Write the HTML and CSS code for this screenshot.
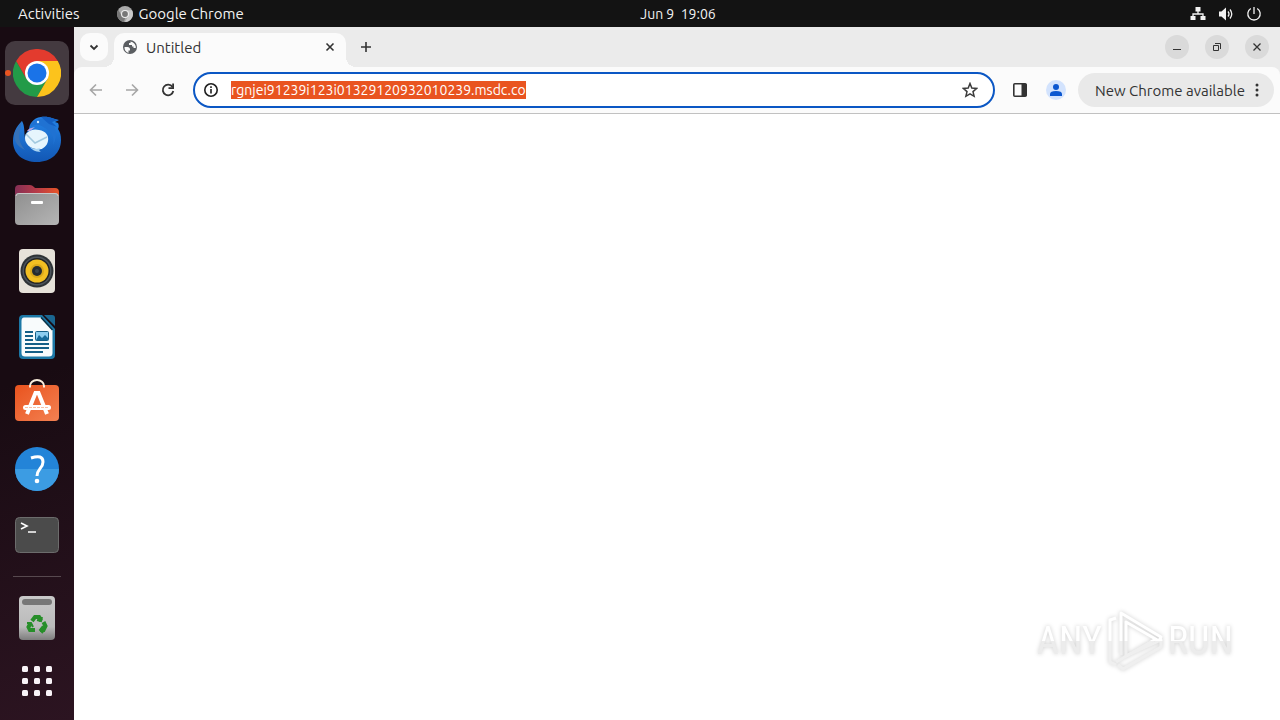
FILE: index.html
```html
<!DOCTYPE html>
<html lang="en">
  <head>
    <meta charset="UTF-8" />
    <meta name="viewport" content="width=device-width, initial-scale=1.0" />
    <title>Untitled</title>
    <link rel="stylesheet" href="styles.css">
  </head>
  <body>
    <header class="topbar">
      <div class="topbar-left">
        <button class="topbar-button">Activities</button>
        <button class="topbar-button app-menu">
          <svg width="16" height="16" viewBox="0 0 16 16" aria-hidden="true">
            <circle cx="8" cy="8" r="8" fill="#a9a9a9" />
            <path d="M8 4.2H15A8 8 0 0 1 8 16l3.3-6.1z" fill="#c9c9c9" />
            <path d="M1.3 3.8 4.7 9.9 8 12 7 16A8 8 0 0 1 1.3 3.8z" fill="#777" />
            <circle cx="8" cy="8" r="4" fill="#eee" />
            <circle cx="8" cy="8" r="2.9" fill="#777" />
          </svg>
          Google Chrome
        </button>
      </div>
      <button class="topbar-button clock">Jun 9&nbsp; 19:06</button>
      <button class="topbar-button status" aria-label="System menu">
        <svg width="16" height="16" viewBox="0 0 16 16" fill="#f2f2f2">
          <path d="M5.5 1h5v4.500h-5zM.5 10h5v4h-5zM10.500 10h5v4h-5z" />
          <path d="M8 5v3M3 11V8h10v3" fill="none" stroke="#f2f2f2" stroke-width="1.300" />
        </svg>
        <svg width="16" height="16" viewBox="0 0 16 16" fill="#f2f2f2">
          <path d="M1 5.500h2.500L8 1.500v13l-4.500-4H1z" />
          <path d="M10 5.500q2 2.500 0 5M12 3.500q3.500 4.500 0 9" fill="none" stroke="#f2f2f2" stroke-width="1.300" />
        </svg>
        <svg width="16" height="16" viewBox="0 0 16 16" fill="none" stroke="#f2f2f2" stroke-width="1.300">
          <path d="M8 1v7M4.800 2.500a6.200 6.200 0 1 0 6.400 0" />
        </svg>
      </button>
    </header>

    <div class="desktop">
      <nav class="dock" aria-label="Dock">
        <button class="dock-item active" aria-label="Google Chrome">
          <svg width="48" height="48" viewBox="0 0 48 48">
            <path d="M24 24 3.200 12A24 24 0 0 1 44.800 12z" fill="#e33b2e" />
            <path d="M3.200 12A24 24 0 0 0 24 48L34.400 30 24 24 13.600 30z" fill="#229b48" />
            <path d="M24 12H44.800A24 24 0 0 1 24 48L34.400 30z" fill="#fcc31c" />
            <path d="M3.200 12 13.600 30 24 12z" fill="#e33b2e" />
            <circle cx="24" cy="24" r="12" fill="#fff" />
            <circle cx="24" cy="24" r="9.500" fill="#1a73e8" />
          </svg>
        </button>
        <button class="dock-item" aria-label="Thunderbird">
          <svg width="48" height="48" viewBox="0 0 48 48">
            <defs>
              <linearGradient id="bird" x2="0" y2="1">
                <stop stop-color="#2584e6" />
                <stop offset="1" stop-color="#1257b4" />
              </linearGradient>
            </defs>
            <path d="M9 6C3 12 0 18 0 26c0 13 10 21 24 21s24-9 24-22c0-5-1-8-3-11 1-2 1-4 0-6l-3-1 4-2c-7-1-9-4-18-3-8 1-12 7-12 13-3 2-4 5-4 8-1-5 0-12-3-17z" fill="url(#bird)" />
            <path d="M9 6c-2 11-6 18 3 29C3 31 0 24 2 17z" fill="#3672b9" />
            <path d="M17 12c5-4 11-2 15 1 6 4 10 9 8 17 6-10 3-22-8-26-7-2-13 2-15 8z" fill="#2072d2" />
            <path d="M28 2c9-1 11 2 17 3l-6 2 5 5-8-3z" fill="#1460c3" />
            <path d="M12 23c0-6 7-10 14-8 7 1 10 6 9 11-1 6-7 10-12 8-6-1-11-5-11-11z" fill="#e6f5fd" />
            <path d="m13 19 9 9 12-6" fill="none" stroke="#a2c9df" stroke-width="1.500" />
            <path d="M16 31c4 4 9 3 11 2-1 2-1 3 1 4-6 0-10-3-12-6z" fill="#a9d4f2" />
            <path d="M14 16c3-4 6-3 8-4l-5 4z" fill="#b9a9e4" />
            <circle cx="25" cy="7" r="1.200" fill="#cfeaff" />
          </svg>
        </button>
        <button class="dock-item" aria-label="Files">
          <svg width="48" height="48" viewBox="0 0 48 48">
            <defs>
              <linearGradient id="folderback"><stop stop-color="#842f55" /><stop offset=".5" stop-color="#b83b48" /><stop offset="1" stop-color="#e85527" /></linearGradient>
              <linearGradient id="folder" x2="1" y2="1"><stop stop-color="#8f8f8f" /><stop offset="1" stop-color="#b5b5b5" /></linearGradient>
            </defs>
            <path d="M2 20V8q0-4 4-4h11q2 0 4 2l1 1h20q4 0 4 4v12z" fill="url(#folderback)" />
            <rect x="2" y="12" width="44" height="32" rx="4" fill="url(#folder)" />
            <path d="M3 15q0-2.500 3-2.500h36q3 0 3 2.500" fill="none" stroke="#c9c9c9" />
            <rect x="18" y="20" width="12" height="3" rx="1" fill="#fff" />
          </svg>
        </button>
        <button class="dock-item" aria-label="Rhythmbox">
          <svg width="48" height="48" viewBox="0 0 48 48">
            <rect x="6" y="2" width="36" height="44" rx="4" fill="#e6e2d9" />
            <circle cx="24" cy="24" r="16.500" fill="#2e3336" />
            <circle cx="24" cy="24" r="14.500" fill="#4d555c" />
            <circle cx="24" cy="24" r="13" fill="#232424" />
            <circle cx="24" cy="24" r="11.500" fill="#f2bf22" />
            <circle cx="24" cy="24" r="7" fill="#d9a81b" />
            <circle cx="24" cy="24" r="5" fill="#252b30" />
            <circle cx="24" cy="24" r="2" fill="#3a444c" />
          </svg>
        </button>
        <button class="dock-item" aria-label="LibreOffice Writer">
          <svg width="48" height="48" viewBox="0 0 48 48">
            <path d="M10 2h19l13 14v26q0 4-4 4H10q-4 0-4-4V6q0-4 4-4z" fill="#1c78a6" />
            <path d="M11 4.500h17L39.500 17v23q0 3.500-3.500 3.500H12q-3.500 0-3.500-3.500V8q0-3.500 2.500-3.500z" fill="#f8fbfc" />
            <path d="M31 2h8q3 0 3 3v8z" fill="#1a6791" />
            <path d="M28 4.500 39.500 17" stroke="#093247" stroke-width="1.500" />
            <path d="M12 19h8M12 23h8M12 27h8M12 31h24M12 35h24M12 39h18" stroke="#145f87" stroke-width="2" />
            <rect x="22.500" y="18.500" width="13" height="9" rx="1" fill="#8ccdf0" stroke="#145f87" />
            <path d="m23 27 3-5 3 3 3-3 3 3v2z" fill="#176b9b" />
          </svg>
        </button>
        <button class="dock-item" aria-label="Ubuntu Software">
          <svg width="48" height="48" viewBox="0 0 48 48">
            <defs><linearGradient id="bag" x2="1" y2="1"><stop stop-color="#e9531e" /><stop offset="1" stop-color="#f38152" /></linearGradient></defs>
            <rect x="2" y="6" width="44" height="36" rx="4" fill="url(#bag)" />
            <path d="M17 8.500V7a7 6 0 0 1 14 0v1.500" fill="none" stroke="#faeedc" stroke-width="2" />
            <path d="M14 35 22.500 14h3L34 35" fill="none" stroke="#fff" stroke-width="4" />
            <rect x="10" y="26" width="28" height="5" rx="2.500" fill="#fff" />
            <path d="M12 28.500h24" stroke="#f6a47e" stroke-dasharray="3 1" stroke-width=".7" />
          </svg>
        </button>
        <button class="dock-item" aria-label="Help">
          <svg width="48" height="48" viewBox="0 0 48 48">
            <circle cx="24" cy="24" r="22" fill="#2384d8" />
            <path d="M2 24a22 22 0 0 0 44 0z" fill="#3c9ce3" />
            <path d="M18 13q12-4 12 4c0 6-6 7-6 14" fill="none" stroke="#fff" stroke-width="3" />
            <circle cx="24" cy="36" r="2.300" fill="#fff" />
          </svg>
        </button>
        <button class="dock-item" aria-label="Terminal">
          <svg width="48" height="48" viewBox="0 0 48 48">
            <rect x="2.500" y="6.500" width="43" height="35" rx="4" fill="#4b4b4b" stroke="#6c6c6c" />
            <path d="m8 12 6 3-6 3M15 21h8" fill="none" stroke="#fff" stroke-width="1.600" />
          </svg>
        </button>
        <hr class="dock-separator" />
        <button class="dock-item" aria-label="Trash">
          <svg width="48" height="48" viewBox="0 0 48 48">
            <defs><linearGradient id="trash" x2="0" y2="1"><stop stop-color="#c9c9c9" /><stop offset=".7" stop-color="#bbb" /><stop offset="1" stop-color="#7d7d7d" /></linearGradient></defs>
            <rect x="6" y="2" width="36" height="44" rx="4" fill="url(#trash)" />
            <rect x="9" y="5" width="30" height="6" rx="3" fill="#777" />
            <g fill="none" stroke="#278e29" stroke-width="4">
              <path d="m19 27 3-4h4l2 4M30.500 28l2 4-2 4H27M22 36h-5l-1.500-3 2-4" />
              <path d="m29 23-1 4-4-1M30 32l-3 4 3 3M14 29h4l2 4" stroke-width="2" />
            </g>
          </svg>
        </button>
        <button class="dock-item apps" aria-label="Show Applications">
          <svg width="32" height="32" viewBox="0 0 32 32" fill="#f8f3f7">
            <rect x="1" y="1" width="6" height="6" rx="1.500" /><rect x="13" y="1" width="6" height="6" rx="1.500" /><rect x="25" y="1" width="6" height="6" rx="1.500" />
            <rect x="1" y="13" width="6" height="6" rx="1.500" /><rect x="13" y="13" width="6" height="6" rx="1.500" /><rect x="25" y="13" width="6" height="6" rx="1.500" />
            <rect x="1" y="25" width="6" height="6" rx="1.500" /><rect x="13" y="25" width="6" height="6" rx="1.500" /><rect x="25" y="25" width="6" height="6" rx="1.500" />
          </svg>
        </button>
      </nav>

      <div class="browser">
        <div class="tabstrip">
          <button class="tab-search" aria-label="Search tabs">
            <svg width="16" height="16" viewBox="0 0 16 16"><path d="m4.500 6.500 3.500 3.500 3.500-3.500" fill="none" stroke="#333" stroke-width="1.800" /></svg>
          </button>
          <div class="tab">
            <svg width="16" height="16" viewBox="0 0 16 16" aria-hidden="true">
              <circle cx="8" cy="8" r="7" fill="#5b5e62" />
              <path d="M2.500 8h3q2.500 0 2.500 2.500v1H6.500V14A6 6 0 0 1 2.500 8zM8.500 2.500V4H7v2h3v1.500h1.500V9h2.300A6 6 0 0 0 8.500 2.500z" fill="#fbfbfb" />
            </svg>
            <span class="tab-title">Untitled</span>
            <button class="icon-button tab-close" aria-label="Close tab">
              <svg width="16" height="16" viewBox="0 0 16 16"><path d="m4.500 4.500 7 7m0-7-7 7" stroke="#333" stroke-width="1.600" /></svg>
            </button>
          </div>
          <button class="icon-button new-tab" aria-label="New tab">
            <svg width="16" height="16" viewBox="0 0 16 16"><path d="M8 3v10M3 8h10" stroke="#333" stroke-width="1.600" /></svg>
          </button>
          <div class="window-controls">
            <button class="window-button" aria-label="Minimize">
              <svg width="16" height="16" viewBox="0 0 16 16"><path d="M4 10.500h8" stroke="#333" /></svg>
            </button>
            <button class="window-button" aria-label="Restore">
              <svg width="16" height="16" viewBox="0 0 16 16" fill="none" stroke="#333"><path d="M4.500 6.500h5v5h-5zM6 4.500h5.500V10" /></svg>
            </button>
            <button class="window-button" aria-label="Close">
              <svg width="16" height="16" viewBox="0 0 16 16"><path d="m4.500 4.500 7 7m0-7-7 7" stroke="#333" stroke-width="1.300" /></svg>
            </button>
          </div>
        </div>

        <div class="toolbar">
          <div class="nav-buttons">
            <button class="icon-button" aria-label="Back" disabled>
              <svg width="16" height="16" viewBox="0 0 16 16" fill="none" stroke="#a6a6a6" stroke-width="1.600"><path d="M14 8H3M8 2.500 2.500 8 8 13.500" /></svg>
            </button>
            <button class="icon-button" aria-label="Forward" disabled>
              <svg width="16" height="16" viewBox="0 0 16 16" fill="none" stroke="#a6a6a6" stroke-width="1.600"><path d="M2 8h11M8 2.500 13.500 8 8 13.500" /></svg>
            </button>
            <button class="icon-button" aria-label="Reload">
              <svg width="16" height="16" viewBox="0 0 16 16"><path d="M12.500 5A5.300 5.300 0 1 0 13.300 9" fill="none" stroke="#333" stroke-width="1.800" /><path d="M14 1.500V7H8.500V5.300h3.700V1.500z" fill="#333" /></svg>
            </button>
          </div>
          <form class="omnibox">
            <button type="button" class="icon-button" aria-label="View site information">
              <svg width="16" height="16" viewBox="0 0 16 16"><circle cx="8" cy="8" r="6.200" fill="none" stroke="#1f1f1f" stroke-width="1.600" /><path d="M8 7v4.500M8 4.300v1.700" stroke="#1f1f1f" stroke-width="1.600" /></svg>
            </button>
            <input class="url" id="url" type="text" aria-label="Address and search bar" value="rgnjei91239i123i01329120932010239.msdc.co" spellcheck="false" autocomplete="off" />
            <button type="button" class="icon-button" aria-label="Bookmark this tab">
              <svg width="16" height="16" viewBox="0 0 16 16"><path d="m8 1.500 1.800 4.500 4.900.4L11 9.600l1.100 4.700L8 11.800l-4.100 2.500L5 9.600 1.300 6.400 6.200 6z" fill="none" stroke="#3c3c3c" stroke-width="1.500" /></svg>
            </button>
          </form>
          <div class="toolbar-actions">
            <button class="icon-button" aria-label="Side panel">
              <svg width="16" height="16" viewBox="0 0 16 16"><rect x="1.800" y="1.800" width="12.400" height="12.400" rx="1" fill="none" stroke="#333" stroke-width="1.600" /><path d="M9.500 2h5v12h-5z" fill="#333" /></svg>
            </button>
            <button class="icon-button" aria-label="Profile">
              <svg width="20" height="20" viewBox="0 0 20 20"><circle cx="10" cy="10" r="10" fill="#d3e3fd" /><circle cx="10" cy="7" r="3" fill="#0b57d0" /><path d="M4 16v-2q0-3 6-3t6 3v2z" fill="#0b57d0" /></svg>
            </button>
          </div>
          <button class="update-button">
            New Chrome available
            <svg width="4" height="16" viewBox="0 0 4 16" fill="#333"><circle cx="2" cy="3" r="1.500" /><circle cx="2" cy="8" r="1.500" /><circle cx="2" cy="13" r="1.500" /></svg>
          </button>
        </div>

        <main class="page">
          <div class="watermark">
            <span class="watermark-text">ANY</span>
            <svg width="58" height="62" viewBox="0 0 58 62" fill="none" stroke-linejoin="round">
              <defs>
                <linearGradient id="mark" gradientUnits="userSpaceOnUse" x1="0" y1="0" x2="0" y2="62">
                  <stop offset=".5" stop-color="#fff" />
                  <stop offset=".5" stop-color="#efefef" />
                </linearGradient>
              </defs>
              <g stroke="url(#mark)" stroke-width="3">
                <path d="M10 8 4 10v42l6 3" />
                <path d="M15 45V3l40 24-2 4-33-19v34l35-16v7L17 59l-5-4" />
                <path d="m10 52 40-23" />
              </g>
            </svg>
            <span class="watermark-text">RUN</span>
          </div>
        </main>
      </div>
    </div>

    <script>
      const url = document.getElementById("url");
      url.focus();
      url.select();
    </script>
  </body>
</html>
```
FILE: styles.css
```css
* {
  box-sizing: border-box;
}

body {
  margin: 0;
  min-height: 100vh;
  display: flex;
  flex-direction: column;
  background: #fff;
  font-family: Ubuntu, "Noto Sans", sans-serif;
  font-size: 15px;
  color: #333;
}

button {
  border: 0;
  padding: 0;
  background: none;
  font: inherit;
  color: inherit;
}

svg {
  display: block;
  flex-shrink: 0;
}

.topbar {
  display: grid;
  grid-template-columns: 1fr auto 1fr;
  align-items: center;
  height: 27px;
  padding: 0 18px;
  background: #131313;
  color: #f2f2f2;
}

.topbar-left {
  display: flex;
  gap: 37px;
}

.topbar-button {
  display: flex;
  align-items: center;
  gap: 6px;
  white-space: nowrap;
}

.clock {
  padding-left: 76px;
  font-size: 14px;
}

.status {
  justify-self: end;
  gap: 12px;
}

.desktop {
  flex: 1;
  display: flex;
}

.dock {
  width: 74px;
  padding: 14px 5px 0;
  display: flex;
  flex-direction: column;
  gap: 2px;
  background: linear-gradient(160deg, #180b12 50%, #2c1421);
}

.dock-item {
  position: relative;
  display: flex;
  align-items: center;
  justify-content: center;
  height: 64px;
  border-radius: 10px;
}

.dock-item.active {
  background: #443a40;
}

.dock-item.active::before {
  content: "";
  position: absolute;
  left: 0;
  top: 29px;
  width: 6px;
  height: 6px;
  border-radius: 50%;
  background: #e95420;
}

.dock-item.apps {
  height: 58px;
}

.dock-separator {
  width: 48px;
  height: 1px;
  margin: 7px auto;
  border: 0;
  background: #57494f;
}

.browser {
  flex: 1;
  min-width: 0;
  display: flex;
  flex-direction: column;
  background: #ebebeb;
}

.tabstrip {
  display: flex;
  align-items: center;
  height: 40px;
  padding: 0 11px 0 6px;
}

.tab-search {
  display: grid;
  place-items: center;
  width: 28px;
  height: 28px;
  border-radius: 10px;
  background: #fbfbfb;
}

.tab {
  position: relative;
  align-self: flex-end;
  display: flex;
  align-items: center;
  gap: 8px;
  width: 232px;
  height: 34px;
  margin-left: 6px;
  padding: 0 8px 6px;
  border-radius: 10px 10px 0 0;
  background: #fbfbfb;
}

.tab::before,
.tab::after {
  content: "";
  position: absolute;
  bottom: 0;
  width: 10px;
  height: 10px;
}

.tab::before {
  right: 100%;
  background: radial-gradient(circle at 0 0, transparent 10px, #fbfbfb 10px);
}

.tab::after {
  left: 100%;
  background: radial-gradient(circle at 100% 0, transparent 10px, #fbfbfb 10px);
}

.tab-title {
  flex: 1;
}

.icon-button {
  display: grid;
  place-items: center;
}

.new-tab {
  margin-left: 12px;
}

.window-controls {
  display: flex;
  gap: 16px;
  margin-left: auto;
}

.window-button {
  display: grid;
  place-items: center;
  width: 24px;
  height: 24px;
  border-radius: 50%;
  background: #dadada;
}

.toolbar {
  display: flex;
  align-items: center;
  height: 47px;
  padding: 0 6px 0 14px;
  border-bottom: 1px solid #c1c1c1;
  border-radius: 8px 8px 0 0;
  background: #fbfbfb;
}

.nav-buttons {
  display: flex;
  gap: 20px;
}

.omnibox {
  flex: 1;
  min-width: 0;
  display: flex;
  align-items: center;
  height: 36px;
  margin: 0 17px;
  padding: 0 15px 0 8px;
  border: 2px solid #0b57c4;
  border-radius: 18px;
  background: #fff;
}

.url {
  flex: 1;
  min-width: 0;
  margin: 0 12px;
  padding: 0;
  border: 0;
  outline: 0;
  background: none;
  font: inherit;
  font-size: 14px;
  line-height: 18px;
  color: #1f1f1f;
}

.url::selection {
  background: #e95420;
  color: #fff;
}

.toolbar-actions {
  display: flex;
  align-items: center;
  gap: 18px;
  margin-right: 12px;
}

.update-button {
  display: flex;
  align-items: center;
  gap: 10px;
  height: 34px;
  padding: 0 15px 0 17px;
  border-radius: 17px;
  background: #e9e9e9;
  white-space: nowrap;
}

.page {
  flex: 1;
  display: flex;
  align-items: flex-end;
  justify-content: flex-end;
  padding: 0 47px 48px;
  background: #fff;
}

.watermark {
  display: flex;
  align-items: center;
  gap: 4px;
  filter: drop-shadow(0 0 2px rgba(0, 0, 0, 0.2));
}

.watermark-text {
  font-family: "Liberation Sans Narrow", "Roboto Condensed", sans-serif;
  font-size: 38px;
  line-height: 60px;
  color: transparent;
  background: linear-gradient(#fff 50%, #ececec 50%);
  background-clip: text;
  -webkit-background-clip: text;
}
```
